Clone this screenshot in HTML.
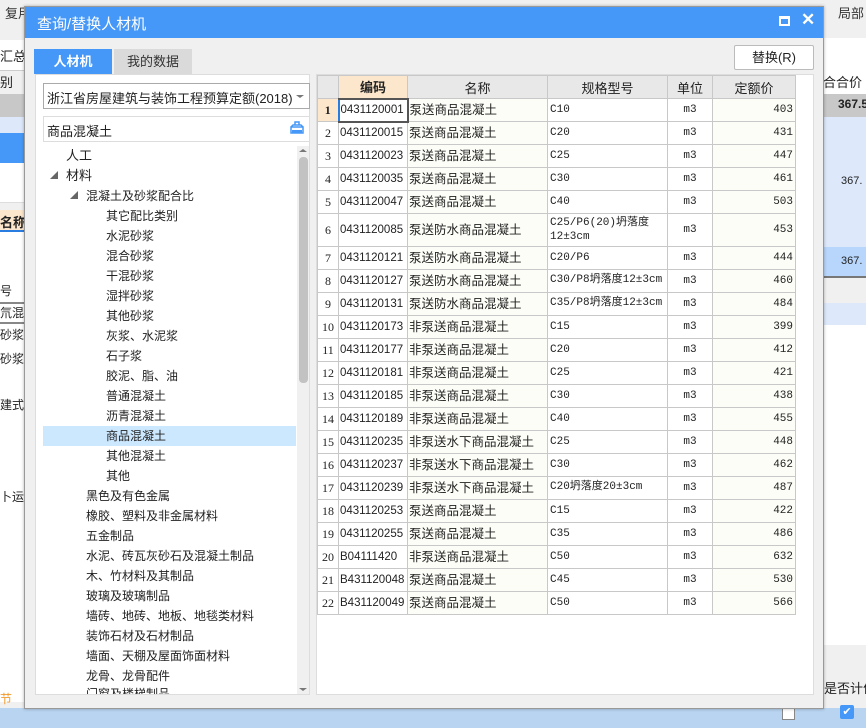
<!DOCTYPE html>
<html><head><meta charset="utf-8"><style>
*{margin:0;padding:0;box-sizing:border-box}
body{width:866px;height:728px;overflow:hidden;background:#f0f0f0;font-family:"Liberation Sans","Noto Sans CJK SC",sans-serif;font-size:12px;color:#222;position:relative}
.a{position:absolute;white-space:nowrap}
.tree div{position:absolute;height:20px;line-height:20px;font-size:12px;white-space:nowrap}
table{border-collapse:collapse;table-layout:fixed;width:478px}
td{border:1px solid #c8c8c8;height:23px;padding:0 2px;white-space:nowrap;overflow:hidden;font-size:12px;line-height:15px;vertical-align:middle}
td>span{display:inline-block;line-height:15px;vertical-align:middle}
th{border:1px solid #c8c8c8;height:23px;background:#e8e8e8;font-weight:normal;font-size:13px}
td.n{text-align:center;background:#fff;font-family:"Liberation Serif",serif;font-size:12px;padding:0}
td.m{font-family:"Liberation Mono","Noto Sans CJK SC",monospace;font-size:11px}
td.c{font-family:"Liberation Sans",sans-serif;font-size:11.5px;padding:0 1px}
td.u{text-align:center}
td.p{text-align:right;background:#fdfdf8}
td.nm{background:#fdfdf8;font-size:12.5px;padding:0 1px}
</style></head><body>
<div class="a" style="left:5px;top:3px;font-size:13px;color:#333">复用</div>
<div class="a" style="left:838px;top:3px;font-size:13px;color:#333">局部</div>
<div class="a" style="left:0;top:40px;width:25px;height:30px;background:#fff"></div>
<div class="a" style="left:0;top:46px;font-size:13px">汇总</div>
<div class="a" style="left:0;top:70px;width:25px;height:24px;background:#f0f0f0;border-top:1px solid #ccc"></div>
<div class="a" style="left:0;top:72px;font-size:13px">别</div>
<div class="a" style="left:0;top:94px;width:25px;height:23px;background:#c8c8c8"></div>
<div class="a" style="left:0;top:117px;width:25px;height:16px;background:#dde9fb"></div>
<div class="a" style="left:0;top:133px;width:25px;height:30px;background:#4598f7"></div>
<div class="a" style="left:0;top:163px;width:25px;height:40px;background:#fff;border-bottom:1px solid #ddd"></div>
<div class="a" style="left:0;top:210px;width:25px;height:22px;background:#fde7cc;border-bottom:2px solid #2a7de0"></div>
<div class="a" style="left:0;top:212px;font-weight:bold;font-size:13px">名称</div>
<div class="a" style="left:0;top:232px;width:25px;height:470px;background:#fff"></div>
<div class="a" style="left:0;top:282px;font-size:12px">号</div>
<div class="a" style="left:0;top:302px;width:25px;height:22px;border-top:2px solid #888;border-bottom:2px solid #888;font-size:12px;overflow:hidden">氘混凝</div>
<div class="a" style="left:0;top:326px;font-size:12px">砂浆</div>
<div class="a" style="left:0;top:350px;font-size:12px">砂浆</div>
<div class="a" style="left:0;top:396px;font-size:12px">建式拆</div>
<div class="a" style="left:0;top:488px;font-size:12px">卜运输</div>
<div class="a" style="left:0;top:690px;color:#f39a2c;font-size:12px">节</div>
<div class="a" style="left:0;top:708px;width:866px;height:20px;background:#b8d4f0"></div>
<div class="a" style="left:824px;top:38px;width:42px;height:30px;background:#fff"></div>
<div class="a" style="left:824px;top:68px;width:42px;height:26px;background:#fff"></div>
<div class="a" style="left:823px;top:72px;font-size:13px">合合价</div>
<div class="a" style="left:824px;top:94px;width:42px;height:23px;background:#c8c8c8;font-weight:bold;font-size:12px;padding:3px 0 0 14px;overflow:hidden">367.5</div>
<div class="a" style="left:824px;top:117px;width:42px;height:130px;background:#dde9fb;padding:58px 0 0 17px;font-size:11px">367.</div>
<div class="a" style="left:824px;top:247px;width:42px;height:31px;background:#b8d6fb;border-bottom:2px solid #777;padding:8px 0 0 17px;font-size:11px">367.</div>
<div class="a" style="left:824px;top:303px;width:42px;height:22px;background:#dde9fb"></div>
<div class="a" style="left:824px;top:325px;width:42px;height:320px;background:#fff"></div>
<div class="a" style="left:824px;top:678px;font-size:13px">是否计价</div>
<div class="a" style="left:840px;top:705px;width:14px;height:14px;background:#4598f7;border-radius:2px;color:#fff;font-size:11px;text-align:center;line-height:14px">✔</div>
<div class="a" style="left:782px;top:707px;width:13px;height:13px;border:1px solid #888;background:#fff"></div>

<div class="a" style="left:24px;top:6px;width:800px;height:703px;background:#f0f0f0;border:1px solid #999;box-shadow:0 0 3px rgba(0,0,0,.3)"></div>
<div class="a" style="left:25px;top:7px;width:798px;height:31px;background:#4598f7"></div>
<div class="a" style="left:37px;top:13px;color:#fff;font-size:15px">查询/替换人材机</div>
<div class="a" style="left:779px;top:16px;width:11px;height:10px;border:2px solid #fff;border-top-width:3px"></div>
<div class="a" style="left:801px;top:10px;color:#fff;font-size:17px;font-weight:bold">✕</div>
<div class="a" style="left:34px;top:49px;width:78px;height:25px;background:#4598f7;color:#fff;font-weight:bold;font-size:13px;text-align:center;line-height:25px">人材机</div>
<div class="a" style="left:114px;top:49px;width:78px;height:25px;background:#dadada;color:#333;font-size:13px;text-align:center;line-height:25px">我的数据</div>
<div class="a" style="left:734px;top:45px;width:80px;height:25px;background:#fff;border:1px solid #bbb;border-radius:2px;text-align:center;line-height:23px;font-size:13px">替换(R)</div>
<div class="a" style="left:35px;top:74px;width:275px;height:621px;background:#fff;border:1px solid #ddd"></div>
<div class="a" style="left:43px;top:83px;width:267px;height:26px;border:1px solid #aaa;background:#fff;padding:4px 0 0 3px;font-size:13px">浙江省房屋建筑与装饰工程预算定额(2018)</div>
<div class="a" style="left:296px;top:95px;width:0;height:0;border-left:4px solid transparent;border-right:4px solid transparent;border-top:3px solid #777"></div>
<div class="a" style="left:43px;top:116px;width:267px;height:26px;border:1px solid #ddd;background:#fff;padding:4px 0 0 3px;font-size:13px">商品混凝土</div>
<svg class="a" style="left:290px;top:121px" width="14" height="14" viewBox="0 0 14 14"><path d="M5 1h4v3H5z M1 6h12v6H1z M1 6l2-2h8l2 2" fill="none" stroke="#4598f7" stroke-width="1.5"/><path d="M2 9h10v3H2z" fill="#4598f7"/></svg>
<div class="a" style="left:297px;top:146px;width:12px;height:548px;background:#f0f0f0"></div>
<div class="a" style="left:299px;top:157px;width:9px;height:226px;background:#c2c2c2;border-radius:4px"></div>
<div class="a" style="left:299px;top:149px;width:0;height:0;border-left:4px solid transparent;border-right:4px solid transparent;border-bottom:3px solid #777"></div>
<div class="a" style="left:299px;top:688px;width:0;height:0;border-left:4px solid transparent;border-right:4px solid transparent;border-top:3px solid #777"></div>
<div class="a" style="left:43px;top:426px;width:253px;height:20px;background:#cce8ff"></div>
<div class="tree">
<div style="left:66px;top:146px;font-size:13px">人工</div>
<div style="left:50px;top:166px;font-size:8px;color:#666">◢</div>
<div style="left:66px;top:166px;font-size:13px">材料</div>
<div style="left:70px;top:186px;font-size:8px;color:#666">◢</div>
<div style="left:86px;top:186px">混凝土及砂浆配合比</div>
<div style="left:106px;top:206px">其它配比类别</div>
<div style="left:106px;top:226px">水泥砂浆</div>
<div style="left:106px;top:246px">混合砂浆</div>
<div style="left:106px;top:266px">干混砂浆</div>
<div style="left:106px;top:286px">湿拌砂浆</div>
<div style="left:106px;top:306px">其他砂浆</div>
<div style="left:106px;top:326px">灰浆、水泥浆</div>
<div style="left:106px;top:346px">石子浆</div>
<div style="left:106px;top:366px">胶泥、脂、油</div>
<div style="left:106px;top:386px">普通混凝土</div>
<div style="left:106px;top:406px">沥青混凝土</div>
<div style="left:106px;top:426px">商品混凝土</div>
<div style="left:106px;top:446px">其他混凝土</div>
<div style="left:106px;top:466px">其他</div>
<div style="left:86px;top:486px">黑色及有色金属</div>
<div style="left:86px;top:506px">橡胶、塑料及非金属材料</div>
<div style="left:86px;top:526px">五金制品</div>
<div style="left:86px;top:546px">水泥、砖瓦灰砂石及混凝土制品</div>
<div style="left:86px;top:566px">木、竹材料及其制品</div>
<div style="left:86px;top:586px">玻璃及玻璃制品</div>
<div style="left:86px;top:606px">墙砖、地砖、地板、地毯类材料</div>
<div style="left:86px;top:626px">装饰石材及石材制品</div>
<div style="left:86px;top:646px">墙面、天棚及屋面饰面材料</div>
<div style="left:86px;top:666px">龙骨、龙骨配件</div>
<div style="left:86px;top:686px;height:8px;overflow:hidden;line-height:16px">门窗及楼梯制品</div>
</div>
<div class="a" style="left:316px;top:74px;width:498px;height:621px;background:#fff;border:1px solid #ddd"></div>
<table class="a" style="left:317px;top:75px">
<colgroup><col style="width:21px"><col style="width:69px"><col style="width:140px"><col style="width:120px"><col style="width:45px"><col style="width:83px"></colgroup>
<tr><th></th><th style="background:#fde7cc;font-weight:bold">编码</th><th>名称</th><th>规格型号</th><th>单位</th><th>定额价</th></tr>
<tr><td class="n" style="background:#fde7cc;font-weight:bold">1</td><td class="c" style="border:2px solid #555;border-left-color:#2a7de0">0431120001</td><td class="nm"><span>泵送商品混凝土</span></td><td class="m">C10</td><td class="m u">m3</td><td class="m p">403</td></tr>
<tr><td class="n">2</td><td class="c">0431120015</td><td class="nm"><span>泵送商品混凝土</span></td><td class="m">C20</td><td class="m u">m3</td><td class="m p">431</td></tr>
<tr><td class="n">3</td><td class="c">0431120023</td><td class="nm"><span>泵送商品混凝土</span></td><td class="m">C25</td><td class="m u">m3</td><td class="m p">447</td></tr>
<tr><td class="n">4</td><td class="c">0431120035</td><td class="nm"><span>泵送商品混凝土</span></td><td class="m">C30</td><td class="m u">m3</td><td class="m p">461</td></tr>
<tr><td class="n">5</td><td class="c">0431120047</td><td class="nm"><span>泵送商品混凝土</span></td><td class="m">C40</td><td class="m u">m3</td><td class="m p">503</td></tr>
<tr><td class="n" style="height:33px">6</td><td class="c">0431120085</td><td class="nm"><span>泵送防水商品混凝土</span></td><td class="m" style="white-space:normal;line-height:14px">C25/P6(20)坍落度12±3cm</td><td class="m u">m3</td><td class="m p">453</td></tr>
<tr><td class="n">7</td><td class="c">0431120121</td><td class="nm"><span>泵送防水商品混凝土</span></td><td class="m">C20/P6</td><td class="m u">m3</td><td class="m p">444</td></tr>
<tr><td class="n">8</td><td class="c">0431120127</td><td class="nm"><span>泵送防水商品混凝土</span></td><td class="m"><span>C30/P8坍落度12±3cm</span></td><td class="m u">m3</td><td class="m p">460</td></tr>
<tr><td class="n">9</td><td class="c">0431120131</td><td class="nm"><span>泵送防水商品混凝土</span></td><td class="m"><span>C35/P8坍落度12±3cm</span></td><td class="m u">m3</td><td class="m p">484</td></tr>
<tr><td class="n">10</td><td class="c">0431120173</td><td class="nm"><span>非泵送商品混凝土</span></td><td class="m">C15</td><td class="m u">m3</td><td class="m p">399</td></tr>
<tr><td class="n">11</td><td class="c">0431120177</td><td class="nm"><span>非泵送商品混凝土</span></td><td class="m">C20</td><td class="m u">m3</td><td class="m p">412</td></tr>
<tr><td class="n">12</td><td class="c">0431120181</td><td class="nm"><span>非泵送商品混凝土</span></td><td class="m">C25</td><td class="m u">m3</td><td class="m p">421</td></tr>
<tr><td class="n">13</td><td class="c">0431120185</td><td class="nm"><span>非泵送商品混凝土</span></td><td class="m">C30</td><td class="m u">m3</td><td class="m p">438</td></tr>
<tr><td class="n">14</td><td class="c">0431120189</td><td class="nm"><span>非泵送商品混凝土</span></td><td class="m">C40</td><td class="m u">m3</td><td class="m p">455</td></tr>
<tr><td class="n">15</td><td class="c">0431120235</td><td class="nm"><span>非泵送水下商品混凝土</span></td><td class="m">C25</td><td class="m u">m3</td><td class="m p">448</td></tr>
<tr><td class="n">16</td><td class="c">0431120237</td><td class="nm"><span>非泵送水下商品混凝土</span></td><td class="m">C30</td><td class="m u">m3</td><td class="m p">462</td></tr>
<tr><td class="n">17</td><td class="c">0431120239</td><td class="nm"><span>非泵送水下商品混凝土</span></td><td class="m"><span>C20坍落度20±3cm</span></td><td class="m u">m3</td><td class="m p">487</td></tr>
<tr><td class="n">18</td><td class="c">0431120253</td><td class="nm"><span>泵送商品混凝土</span></td><td class="m">C15</td><td class="m u">m3</td><td class="m p">422</td></tr>
<tr><td class="n">19</td><td class="c">0431120255</td><td class="nm"><span>泵送商品混凝土</span></td><td class="m">C35</td><td class="m u">m3</td><td class="m p">486</td></tr>
<tr><td class="n">20</td><td class="c">B04111420</td><td class="nm"><span>非泵送商品混凝土</span></td><td class="m">C50</td><td class="m u">m3</td><td class="m p">632</td></tr>
<tr><td class="n">21</td><td class="c">B431120048</td><td class="nm"><span>泵送商品混凝土</span></td><td class="m">C45</td><td class="m u">m3</td><td class="m p">530</td></tr>
<tr><td class="n">22</td><td class="c">B431120049</td><td class="nm"><span>泵送商品混凝土</span></td><td class="m">C50</td><td class="m u">m3</td><td class="m p">566</td></tr>
</table>
</body></html>
